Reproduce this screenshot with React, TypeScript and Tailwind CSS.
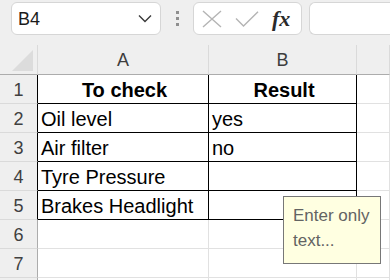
import React from 'react';

const font = { fontFamily: '"Liberation Sans", Arial, sans-serif' };

type Row = { n: number; a: string; b: string; bold?: boolean; table: boolean };

const rows: Row[] = [
  { n: 1, a: 'To check', b: 'Result', bold: true, table: true },
  { n: 2, a: 'Oil level', b: 'yes', table: true },
  { n: 3, a: 'Air filter', b: 'no', table: true },
  { n: 4, a: 'Tyre Pressure', b: '', table: true },
  { n: 5, a: 'Brakes Headlight', b: '', table: true },
  { n: 6, a: '', b: '', table: false },
  { n: 7, a: '', b: '', table: false },
  { n: 0, a: '', b: '', table: false }, // row 8, only its top edge shows
];

const Toolbar = () => (
  <div className="h-[45px] bg-[#efefef] flex items-start pt-[2px] pl-[11px]">
    {/* name box */}
    <div className="w-[150px] h-[33px] bg-white border border-[#d6d6d6] rounded-[6px] flex items-center justify-between pl-[6px] pr-[8px]">
      <span className="text-[18px] text-[#1b1b1b] leading-none">B4</span>
      <svg width="14" height="9" viewBox="0 0 14 9" fill="none">
        <path d="M1 1.5 L7 7.5 L13 1.5" stroke="#3a3a3a" strokeWidth="1.4" />
      </svg>
    </div>
    {/* dots */}
    <div className="w-[32px] h-[33px] flex flex-col items-center justify-center gap-[3px]">
      <div className="w-[3px] h-[3px] bg-[#8f8f8f]" />
      <div className="w-[3px] h-[3px] bg-[#8f8f8f]" />
      <div className="w-[3px] h-[3px] bg-[#8f8f8f]" />
    </div>
    {/* fx box */}
    <div className="w-[109px] h-[33px] bg-white border border-[#d6d6d6] rounded-[6px] flex items-center pl-[8px]">
      <svg width="20" height="18" viewBox="0 0 20 18" fill="none">
        <path d="M1 1 L19 17 M19 1 L1 17" stroke="#b4b4b4" strokeWidth="1.4" />
      </svg>
      <svg className="ml-[13px]" width="24" height="16" viewBox="0 0 24 16" fill="none">
        <path d="M1 7.5 L8.5 15 L23 0.8" stroke="#b4b4b4" strokeWidth="1.4" />
      </svg>
      <span
        className="ml-[13px] text-[22px] italic font-bold text-[#2b2b2b] leading-none"
        style={{ fontFamily: '"Liberation Serif", "DejaVu Serif", serif' }}
      >
        fx
      </span>
    </div>
    <div className="ml-[7px] flex-1 h-[33px] bg-white border border-[#d6d6d6] border-r-0 rounded-l-[6px]" />
  </div>
);

const HeaderRow = () => (
  <>
    <div className="h-[30px] bg-[#efefef] border-b border-[#acacac] border-r border-r-[#dadada] flex items-end justify-end pr-[3px] pb-[3px]">
      <svg width="22" height="21" viewBox="0 0 22 21">
        <polygon points="21,0 21,21 0,21" fill="#dcdcdc" />
      </svg>
    </div>
    {['A', 'B', ''].map((c, i) => (
      <div
        key={i}
        className="h-[30px] bg-[#efefef] border-b border-[#acacac] border-r border-r-[#dadada] flex items-center justify-center pt-[2px] text-[18px] text-[#3d3d3d]"
      >
        {c}
      </div>
    ))}
  </>
);

export default function App() {
  return (
    <div className="w-[390px] h-[280px] overflow-hidden bg-white relative" style={font}>
      <Toolbar />
      <div className="grid grid-cols-[38px_171px_148px_1fr]">
        <HeaderRow />
        {rows.map((r, idx) => (
          <React.Fragment key={idx}>
            <div
              className={`h-[29px] bg-[#efefef] border-b border-b-[#dadada] border-r ${
                r.table ? 'border-r-black' : 'border-r-[#acacac]'
              } flex items-center justify-center pt-[3px] text-[18px] text-[#404040]`}
            >
              {r.n > 0 ? r.n : ''}
            </div>
            <div
              className={`h-[29px] border-b border-r ${
                r.table ? 'border-black' : 'border-[#e1e1e1]'
              } flex items-end pl-[3px] pb-[1px] text-[20px] leading-[24px] text-black ${
                r.bold ? 'justify-center font-bold' : ''
              }`}
            >
              {r.a}
            </div>
            <div
              className={`h-[29px] border-b border-r ${
                r.table ? 'border-black' : 'border-[#e1e1e1]'
              } flex items-end pl-[3px] pb-[1px] text-[20px] leading-[24px] text-black ${
                r.bold ? 'justify-center font-bold' : ''
              }`}
            >
              {r.b}
            </div>
            <div className="h-[29px] border-b border-r border-[#e1e1e1]" />
          </React.Fragment>
        ))}
      </div>
      {/* input message tooltip */}
      <div className="absolute left-[283px] top-[196px] w-[98px] h-[68px] bg-[#ffffe1] border border-[#777777] pl-[9px] pt-[6px] text-[17px] leading-[25px] text-[#636363]">
        Enter only
        <br />
        text...
      </div>
    </div>
  );
}
